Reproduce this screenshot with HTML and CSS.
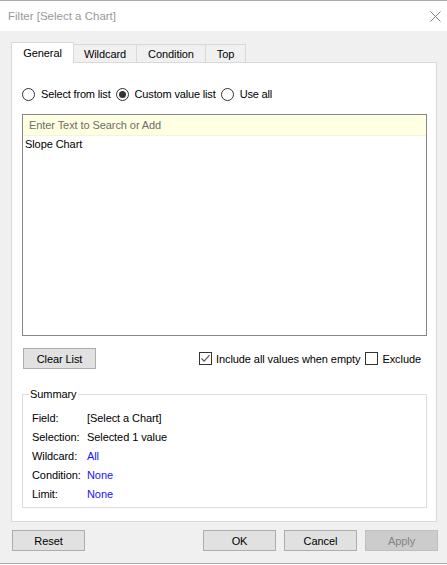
FILE: index.html
```html
<!DOCTYPE html>
<html>
<head>
<meta charset="utf-8">
<title>Filter</title>
<link rel="stylesheet" href="styles.css">
</head>
<body>
<div class="window">
  <div class="titlebar">
    <span class="title">Filter [Select a Chart]</span>
    <svg class="close" width="11" height="11" viewBox="0 0 11 11"><path d="M0.5 0.5L10.5 10.5M10.5 0.5L0.5 10.5" stroke="#808080" stroke-width="1"/></svg>
  </div>
  <div class="main">
    <div class="tabs">
      <div class="tab tab-general active">General</div>
      <div class="tab tab-wildcard">Wildcard</div>
      <div class="tab tab-condition">Condition</div>
      <div class="tab tab-top">Top</div>
    </div>
    <div class="panel">
      <div class="radios">
        <label class="radio"><svg class="rdot" width="13" height="13" viewBox="0 0 13 13"><circle cx="6.5" cy="6.5" r="6" fill="#fff" stroke="#333"/></svg>Select from list</label>
        <label class="radio"><svg class="rdot" width="13" height="13" viewBox="0 0 13 13"><circle cx="6.5" cy="6.5" r="6" fill="#fff" stroke="#333"/><circle cx="6.5" cy="6.5" r="3.5" fill="#333"/></svg>Custom value list</label>
        <label class="radio"><svg class="rdot" width="13" height="13" viewBox="0 0 13 13"><circle cx="6.5" cy="6.5" r="6" fill="#fff" stroke="#333"/></svg>Use all</label>
      </div>
      <div class="listbox">
        <div class="search">Enter Text to Search or Add</div>
        <div class="item">Slope Chart</div>
      </div>
      <div class="options">
        <button class="btn btn-clear">Clear List</button>
        <div class="checks">
          <span class="check"><svg class="box" width="13" height="13" viewBox="0 0 13 13"><rect x="0.5" y="0.5" width="12" height="12" fill="#fff" stroke="#333"/><path d="M2.5 6.5L5.2 9.2L10.5 3.2" fill="none" stroke="#555" stroke-width="1.2"/></svg>Include all values when empty</span>
          <span class="check"><svg class="box" width="13" height="13" viewBox="0 0 13 13"><rect x="0.5" y="0.5" width="12" height="12" fill="#fff" stroke="#333"/></svg>Exclude</span>
        </div>
      </div>
      <fieldset class="summary">
        <legend>Summary</legend>
        <div class="row"><span class="lbl">Field:</span><span class="val">[Select a Chart]</span></div>
        <div class="row"><span class="lbl">Selection:</span><span class="val">Selected 1 value</span></div>
        <div class="row"><span class="lbl">Wildcard:</span><span class="val link">All</span></div>
        <div class="row"><span class="lbl">Condition:</span><span class="val link">None</span></div>
        <div class="row"><span class="lbl">Limit:</span><span class="val link">None</span></div>
      </fieldset>
    </div>
    <div class="footer">
      <button class="btn">Reset</button>
      <div class="spacer"></div>
      <div class="actions">
        <button class="btn">OK</button>
        <button class="btn">Cancel</button>
        <button class="btn disabled">Apply</button>
      </div>
    </div>
  </div>
</div>
</body>
</html>
```
FILE: styles.css
```css
* { box-sizing: border-box; }
html, body { margin: 0; padding: 0; }
body {
  width: 447px;
  height: 565px;
  overflow: hidden;
  background: #ffffff;
  font-family: "Liberation Sans", Arial, sans-serif;
  font-size: 11px;
  letter-spacing: -0.08px;
  color: #000;
}
.window {
  height: 564px;
  background: #f0f0f0;
  border-top: 1px solid #aaaaaa;
  border-bottom: 1px solid #aaaaaa;
  display: flex;
  flex-direction: column;
}
.titlebar {
  height: 30px;
  background: #fff;
  display: flex;
  align-items: center;
  justify-content: space-between;
  padding: 0 6px 0 8px;
}
.title { font-size: 11.5px; letter-spacing: 0; color: #999999; }
.close { display: block; }
.main { padding: 11px 0 0 11px; }
.tabs {
  display: flex;
  align-items: flex-end;
  height: 20px;
}
.tab {
  height: 18px;
  background: #f0f0f0;
  border-top: 1px solid #d9d9d9;
  border-right: 1px solid #d9d9d9;
  display: flex;
  align-items: center;
  justify-content: center;
}
.tab.active {
  height: 21px;
  margin-bottom: -1px;
  background: #fff;
  border-left: 1px solid #d9d9d9;
  position: relative;
  z-index: 1;
  padding-bottom: 1px;
}
.tab-general { width: 63px; }
.tab-wildcard { width: 63px; }
.tab-condition { width: 69px; }
.tab-top { width: 40px; }
.panel {
  width: 426px;
  height: 460px;
  background: #fff;
  border: 1px solid #d9d9d9;
  padding: 23px 0 0 10px;
}
.radios {
  display: flex;
  align-items: center;
  height: 16px;
}
.radio {
  display: flex;
  align-items: center;
  gap: 6px;
  margin-right: 5px;
  letter-spacing: -0.16px;
}
.rdot, .box { display: block; flex: none; }
.listbox {
  margin-top: 12px;
  width: 405px;
  height: 222px;
  border: 1px solid #828790;
  background: #fff;
}
.search {
  height: 21px;
  background: #ffffe1;
  border-bottom: 1px solid #f4f4dc;
  color: #6d6d6d;
  padding-left: 6px;
  display: flex;
  align-items: center;
}
.item {
  height: 16px;
  line-height: 16px;
  padding-left: 2px;
}
.options {
  margin-top: 12px;
  width: 405px;
  height: 21px;
  display: flex;
  align-items: center;
  justify-content: space-between;
  padding-right: 6px;
}
.btn {
  width: 73px;
  height: 21px;
  padding: 0;
  margin: 0;
  background: #e1e1e1;
  border: 1px solid #adadad;
  font-family: inherit;
  font-size: 11px;
  letter-spacing: inherit;
  color: #000;
}
.btn-clear { margin-left: 1px; }
.btn.disabled {
  background: #cccccc;
  border-color: #bfbfbf;
  color: #838383;
}
.checks { display: flex; align-items: center; gap: 5px; }
.check { display: flex; align-items: center; gap: 4px; }
.summary {
  margin: 18px 0 0 0;
  width: 405px;
  min-width: 0;
  border: 1px solid #dcdcdc;
  padding: 7px 0 4px 6px;
}
.summary legend {
  padding: 0 1px;
  line-height: 14px;
}
.row {
  display: flex;
  align-items: center;
  height: 19px;
  padding-left: 3px;
}
.lbl { width: 55px; }
.link { color: #1414ff; }
.footer {
  margin-top: 8px;
  display: flex;
  align-items: center;
  padding: 0 9px 0 1px;
}
.spacer { flex: 1; }
.actions { display: flex; gap: 8px; }
```
